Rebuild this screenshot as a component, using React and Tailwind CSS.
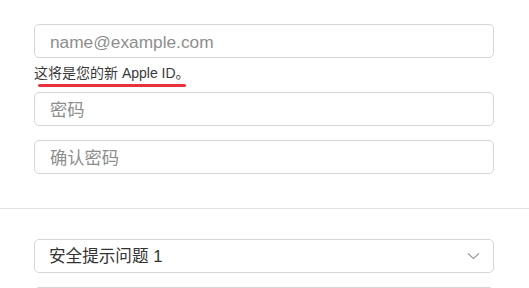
import React from 'react';

const fontStack = { fontFamily: '"Liberation Sans", "Noto Sans CJK SC", sans-serif' };

function Field({ placeholder }) {
  return (
    <input
      type="text"
      placeholder={placeholder}
      className="block w-full h-[34px] rounded-[5px] border border-[#d6d6d6] bg-white px-[15px] pt-[3px] text-[17.3px] text-[#333] placeholder:text-[#8e8e8e] outline-none"
      style={fontStack}
    />
  );
}

export default function App() {
  return (
    <div className="w-[529px] h-[288px] bg-white overflow-hidden" style={fontStack}>
      <div className="pl-[34px] pr-[35px] pt-[24px]">
        <Field placeholder="name@example.com" />
        {/* hint under the apple id field */}
        <div className="h-[34px] pt-[7px]">
          <p className="text-[14px] leading-[16px] text-[#3a3a3a]">这将是您的新 Apple ID。</p>
          <div className="ml-[4px] mt-[3px] h-[3px] w-[148px] rounded-full bg-[#e8323c]" />
        </div>
        <Field placeholder="密码" />
        <div className="mt-[14px]">
          <Field placeholder="确认密码" />
        </div>
      </div>

      <div className="mt-[34px] border-t border-[#e3e3e3]" />

      <div className="pl-[34px] pr-[35px] pt-[30px]">
        <div className="flex h-[34px] items-center justify-between rounded-[5px] border border-[#d6d6d6] bg-white pl-[14px] pr-[15px] pt-[3px]">
          <span className="text-[16.6px] text-[#333]">安全提示问题 1</span>
          <svg width="13" height="8" viewBox="0 0 13 8" className="mr-[-2px] mt-[-3px]">
            <path d="M1 1.5 L6.5 6.5 L12 1.5" fill="none" stroke="#9a9a9a" strokeWidth="1.2" />
          </svg>
        </div>
        <div className="mt-[14px] h-[34px] rounded-[5px] border border-[#d6d6d6]" />
      </div>
    </div>
  );
}
